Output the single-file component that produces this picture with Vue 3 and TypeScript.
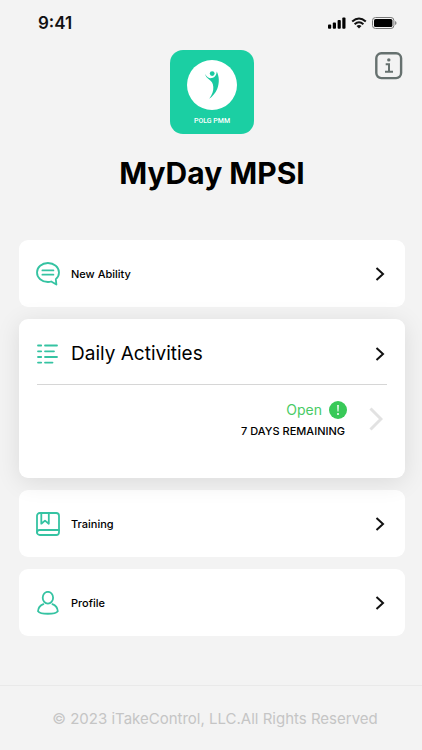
<script setup lang="ts">
type IconName = 'ability' | 'activities' | 'training' | 'profile'

interface MenuItem {
  icon: IconName
  label: string
  status?: { state: string; remaining: string }
}

const items: MenuItem[] = [
  { icon: 'ability', label: 'New Ability' },
  {
    icon: 'activities',
    label: 'Daily Activities',
    status: { state: 'Open', remaining: '7 DAYS REMAINING' },
  },
  { icon: 'training', label: 'Training' },
  { icon: 'profile', label: 'Profile' },
]
</script>

<template>
  <div class="screen">
    <div class="status-bar">
      <span class="time">9:41</span>
      <div class="indicators">
        <svg width="18" height="12" viewBox="0 0 18 12" aria-hidden="true">
          <rect x="0" y="7.5" width="3.2" height="4.2" rx="0.9" />
          <rect x="4.8" y="5.5" width="3.2" height="6.2" rx="0.9" />
          <rect x="9.6" y="3" width="3.2" height="8.7" rx="0.9" />
          <rect x="14.3" y="0.5" width="3.2" height="11.2" rx="0.9" />
        </svg>
        <svg width="16" height="12" viewBox="0 0 16 12" fill="none" aria-hidden="true">
          <path d="M1.2 4.6Q8-1.6 14.8 4.6M3.6 7.2Q8 3.2 12.4 7.2" stroke="#111" stroke-width="2" />
          <path d="M5.5 9Q8 6.9 10.5 9L8 11.6Z" fill="#111" />
        </svg>
        <svg width="25" height="12" viewBox="0 0 25 12" aria-hidden="true">
          <rect x="0.5" y="0.5" width="21.4" height="11" rx="3" fill="none" stroke="#777" />
          <rect x="2" y="2" width="18.4" height="8" rx="1.6" />
          <path d="M23 4Q24.6 4.7 24.6 6T23 8Z" fill="#888" />
        </svg>
      </div>
    </div>

    <header class="header">
      <div class="logo">
        <svg width="50" height="50" viewBox="0 0 50 50" aria-hidden="true">
          <circle cx="25" cy="25" r="25" fill="#fff" />
          <circle cx="25.2" cy="13.6" r="2.4" fill="#1bc9a1" />
          <path
            d="M18.2 14C20 17.600 22.500 18.600 25 18.100C28.200 17.400 29.300 15.200 29.800 11.600C32.200 16.500 32.700 23 30.200 29C28.400 33.200 25.500 36.500 22.200 38.800C25.200 34.600 26.600 31 26.300 27C26 22.800 24.500 21 21.800 19.200C19.800 17.800 18.500 16.300 18.200 14Z"
            fill="#1bc9a1"
          />
        </svg>
        <span class="logo-text">POLG PMM</span>
      </div>
      <h1 class="title">MyDay MPSI</h1>
      <button class="info" type="button" aria-label="Information">
        <svg width="28" height="28" viewBox="0 0 28 28" fill="none" aria-hidden="true">
          <rect x="1.300" y="1.300" width="24.800" height="24.800" rx="5" stroke="#66716f" stroke-width="2.400" />
          <circle cx="13.800" cy="7.900" r="1.700" fill="#66716f" />
          <path d="M10.700 12.200H14V19.600M10 19.700H18" stroke="#66716f" stroke-width="2" />
        </svg>
      </button>
    </header>

    <main class="menu">
      <section v-for="item in items" :key="item.label" class="card" :class="{ raised: item.status }">
        <button class="row" type="button">
          <svg class="icon" width="24" height="24" viewBox="0 0 24 24" aria-hidden="true">
            <template v-if="item.icon === 'ability'">
              <path
                d="M11.900 1C5.800 1 1 5.200 1 10.500S5.800 20 11.900 20Q13.700 20 15.200 19.500L20.400 22.600L19.800 17.100C21.800 15.400 23 13.100 23 10.500C23 5.200 18 1 11.900 1Z"
              />
              <path d="M6.400 8.400H17.400M6.400 12.700H17.400" />
            </template>
            <path
              v-else-if="item.icon === 'activities'"
              d="M2 3.500H5.200M9 3.500H21M2 9.300H5.200M9 9.300H18M2 15H5.200M9 15H21M2 20.600H5.200M9 20.600H16.500"
            />
            <template v-else-if="item.icon === 'training'">
              <rect x="1" y="1" width="22" height="22" rx="2.800" />
              <path d="M1 20.500Q1 18 3.500 18H23M5.300 1V11.700L9 8.600L12.800 11.700V1" />
            </template>
            <template v-else>
              <ellipse cx="11.900" cy="6.700" rx="5.200" ry="5.900" />
              <path d="M7.400 13.200C4 14.600 2.200 17 2 20.200C4.500 23.600 19.300 23.600 21.800 20.200C21.600 17 19.800 14.600 16.400 13.200" />
            </template>
          </svg>
          <span class="label">{{ item.label }}</span>
          <svg class="chevron" width="10" height="14" viewBox="0 0 10 14" aria-hidden="true">
            <path d="M1.500 1L8 7L1.500 13" />
          </svg>
        </button>
        <button v-if="item.status" class="detail" type="button">
          <span class="status">
            <span class="state">
              {{ item.status.state }}
              <svg width="18" height="18" viewBox="0 0 18 18" aria-hidden="true">
                <circle cx="9" cy="9" r="9" fill="#38c958" />
                <path d="M8.200 4H9.800L9.500 10.400H8.500Z" fill="#fff" />
                <circle cx="9" cy="13" r="1" fill="#fff" />
              </svg>
            </span>
            <span class="remaining">{{ item.status.remaining }}</span>
          </span>
          <svg class="chevron faint" width="14" height="24" viewBox="0 0 14 24" aria-hidden="true">
            <path d="M1.500 1.500L12 12L1.500 22.500" />
          </svg>
        </button>
      </section>
    </main>

    <footer class="footer">© 2023 iTakeControl, LLC.All Rights Reserved</footer>
  </div>
</template>

<style>
body {
  margin: 0;
  background: #f3f3f3;
}
</style>

<style scoped>
.screen {
  display: flex;
  flex-direction: column;
  min-height: 100vh;
  box-sizing: border-box;
  background: #f3f3f3;
  color: #000;
  font-family: Inter, 'Liberation Sans', sans-serif;
}

button {
  margin: 0;
  padding: 0;
  border: 0;
  background: none;
  color: inherit;
  font: inherit;
  text-align: left;
  cursor: pointer;
}

svg {
  display: block;
  flex: none;
}

.status-bar {
  display: flex;
  align-items: center;
  justify-content: space-between;
  height: 46px;
  padding: 0 25px 0 38px;
  color: #111;
}

.time {
  font-size: 17px;
  font-weight: 600;
}

.indicators {
  display: flex;
  gap: 5px;
}

.header {
  position: relative;
  display: flex;
  flex-direction: column;
  align-items: center;
  padding: 4px 17px 0 19px;
}

.logo {
  display: flex;
  flex-direction: column;
  align-items: center;
  gap: 6px;
  width: 84px;
  height: 84px;
  box-sizing: border-box;
  padding-top: 10px;
  border-radius: 13px;
  background: #1bcfa3;
}

.logo-text {
  color: #fff;
  font-family: Roboto, sans-serif;
  font-size: 7px;
  font-weight: 500;
  line-height: 10px;
}

.title {
  margin: 19px 0 0;
  font-size: 30px;
  font-weight: 700;
  line-height: 40px;
}

.info {
  position: absolute;
  top: 6px;
  right: 19px;
}

.menu {
  display: flex;
  flex-direction: column;
  gap: 12px;
  padding: 47px 17px 0 19px;
}

.card {
  border-radius: 9px;
  background: #fff;
}

.row {
  display: flex;
  align-items: center;
  gap: 11px;
  width: 100%;
  height: 67px;
  padding: 0 20px 0 17px;
}

.icon {
  fill: none;
  stroke: #35c3a2;
  stroke-width: 1.8;
  stroke-linecap: round;
  stroke-linejoin: round;
}

.label {
  flex: 1;
  font-size: 11px;
  font-weight: 500;
}

.chevron {
  fill: none;
  stroke: #111;
  stroke-width: 2;
}

.raised {
  position: relative;
  min-height: 159px;
  box-shadow: 0 4px 24px rgba(0, 0, 0, 0.1);
}

.raised .label {
  font-size: 19px;
  font-weight: 400;
}

.raised .row {
  height: 69px;
}

.detail {
  display: flex;
  align-items: center;
  justify-content: flex-end;
  gap: 22px;
  width: calc(100% - 36px);
  margin: -4px 18px 0;
  padding: 14px 4px 0 0;
  border-top: 1px solid #d6d6d6;
}

.status {
  display: flex;
  flex-direction: column;
  align-items: flex-end;
  gap: 2px;
}

.state {
  display: flex;
  align-items: center;
  gap: 7px;
  color: #48cb65;
  font-size: 14px;
  line-height: 22px;
}

.remaining {
  padding-right: 2px;
  font-size: 11px;
  font-weight: 500;
  line-height: 16px;
}

.faint {
  stroke: #e2e2e2;
  stroke-width: 3;
}

.footer {
  margin-top: auto;
  padding: 22px 16px 21px 24px;
  border-top: 1px solid #e9e9e9;
  color: #c5c5c5;
  font-size: 15px;
  line-height: 21px;
  text-align: center;
}
</style>
